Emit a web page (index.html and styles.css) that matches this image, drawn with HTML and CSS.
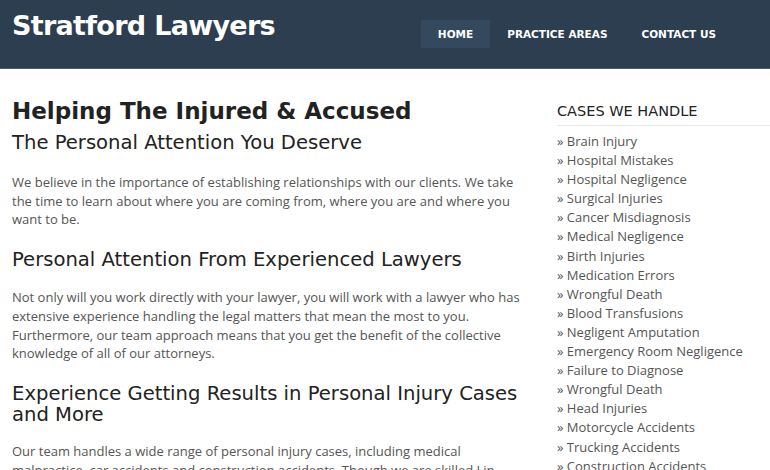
FILE: index.html
```
<!DOCTYPE html>
<html>
<head>
<meta charset="utf-8">
<link rel="stylesheet" href="styles.css">
</head>
<body>
<header class="site-header">
  <div class="logo">Stratford Lawyers</div>
  <nav class="nav">
    <a class="nav-item active">HOME</a>
    <a class="nav-item">PRACTICE AREAS</a>
    <a class="nav-item">CONTACT US</a>
  </nav>
</header>
<div class="page">
  <main class="content">
    <h1 class="title">Helping The Injured &amp; Accused</h1>
    <h2 class="subtitle">The Personal Attention You Deserve</h2>
    <p class="text">We believe in the importance of establishing relationships with our clients. We take the time to learn about where you are coming from, where you are and where you want to be.</p>
    <h3 class="section">Personal Attention From Experienced Lawyers</h3>
    <p class="text">Not only will you work directly with your lawyer, you will work with a lawyer who has extensive experience handling the legal matters that mean the most to you. Furthermore, our team approach means that you get the benefit of the collective knowledge of all of our attorneys.</p>
    <h3 class="section">Experience Getting Results in Personal Injury Cases and More</h3>
    <p class="text text-tight">Our team handles a wide range of personal injury cases, including medical malpractice, car accidents and construction accidents. Though we are skilled Lin</p>
  </main>
  <aside class="sidebar">
    <h4 class="side-title">CASES WE HANDLE</h4>
    <ul class="cases">
      <li>» Brain Injury</li>
      <li>» Hospital Mistakes</li>
      <li>» Hospital Negligence</li>
      <li>» Surgical Injuries</li>
      <li>» Cancer Misdiagnosis</li>
      <li>» Medical Negligence</li>
      <li>» Birth Injuries</li>
      <li>» Medication Errors</li>
      <li>» Wrongful Death</li>
      <li>» Blood Transfusions</li>
      <li>» Negligent Amputation</li>
      <li>» Emergency Room Negligence</li>
      <li>» Failure to Diagnose</li>
      <li>» Wrongful Death</li>
      <li>» Head Injuries</li>
      <li>» Motorcycle Accidents</li>
      <li>» Trucking Accidents</li>
      <li>» Construction Accidents</li>
    </ul>
  </aside>
</div>
</body>
</html>
```
FILE: styles.css
```
html, body { margin: 0; padding: 0; background: #fff; }
body { font-family: "Open Sans", sans-serif; color: #555; overflow: hidden; }
.site-header {
  height: 68px;
  background: #2c3e50;
  border-bottom: 1px solid #4d5b69;
  display: flex;
  align-items: flex-start;
  justify-content: space-between;
  padding: 0 0 0 12px;
}
.logo {
  font-family: "DejaVu Sans", sans-serif;
  font-weight: bold;
  font-size: 27px;
  line-height: 32px;
  color: #fff;
  margin-top: 10px;
  letter-spacing: -0.7px;
}
.nav { display: flex; margin-top: 20px; margin-right: 37px; }
.nav-item {
  font-family: "DejaVu Sans", sans-serif;
  font-weight: bold;
  font-size: 10.5px;
  color: #fff;
  height: 28px;
  line-height: 28px;
  padding: 0 17px;
}
.nav-item.active { background: #34495e; }
.page { display: flex; padding: 0 0 0 12px; }
.content { width: 515px; flex: none; }
.title {
  font-family: "DejaVu Sans", sans-serif;
  font-weight: bold;
  font-size: 23px;
  color: #222;
  margin: 27px 0 0;
  line-height: 30px;
}
.subtitle {
  font-family: "DejaVu Sans", sans-serif;
  font-weight: normal;
  font-size: 19.6px;
  color: #222;
  margin: 5px 0 0;
  line-height: 24px;
}
.section {
  font-family: "DejaVu Sans", sans-serif;
  font-weight: normal;
  font-size: 19.6px;
  color: #222;
  margin: 20px 0 0;
  line-height: 21px;
}
.text { font-size: 13px; line-height: 18.7px; margin: 18px 0 0; }
.text-tight { margin-top: 17px; }
.sidebar { margin-left: 30px; flex: 1; }
.side-title {
  font-family: "DejaVu Sans", sans-serif;
  font-weight: normal;
  font-size: 14.5px;
  line-height: 17px;
  color: #222;
  margin: 34px 0 0;
  padding-bottom: 5px;
  border-bottom: 1px solid #e8e8e8;
}
.cases { list-style: none; margin: 6px 0 0; padding: 0; font-size: 13px; line-height: 19.1px; }
```
